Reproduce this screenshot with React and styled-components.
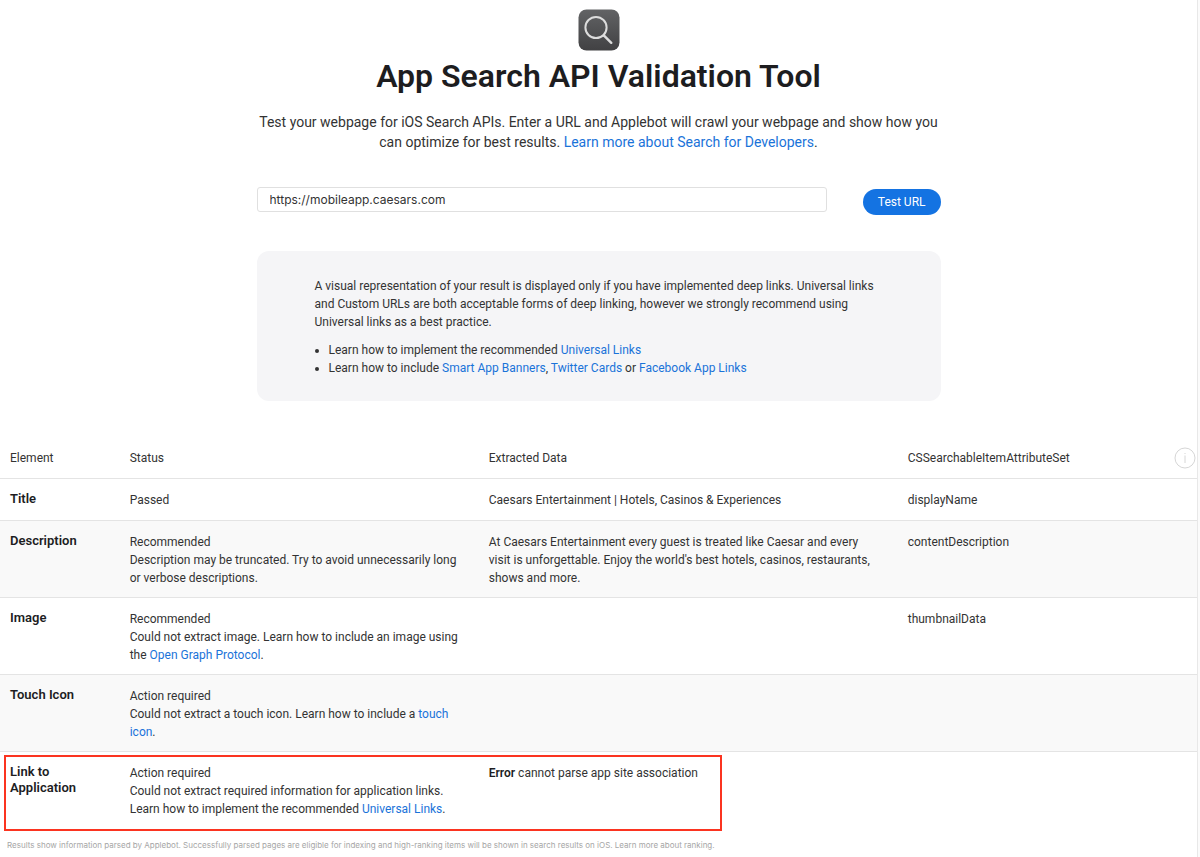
import React, { useState } from 'react'
import styled, { createGlobalStyle } from 'styled-components'

const rows = [
  {
    name: 'Title',
    status: 'Passed',
    data: 'Caesars Entertainment | Hotels, Casinos & Experiences',
    attribute: 'displayName',
  },
  {
    name: 'Description',
    status: 'Recommended',
    detail: 'Description may be truncated. Try to avoid unnecessarily long or verbose descriptions.',
    data: "At Caesars Entertainment every guest is treated like Caesar and every visit is unforgettable. Enjoy the world's best hotels, casinos, restaurants, shows and more.",
    attribute: 'contentDescription',
  },
  {
    name: 'Image',
    status: 'Recommended',
    detail: (
      <>
        Could not extract image. Learn how to include an image using the <a href="#og">Open Graph Protocol</a>.
      </>
    ),
    attribute: 'thumbnailData',
  },
  {
    name: 'Touch Icon',
    status: 'Action required',
    detail: (
      <>
        Could not extract a touch icon. Learn how to include a <a href="#touch">touch icon</a>.
      </>
    ),
  },
  {
    name: 'Link to Application',
    status: 'Action required',
    detail: (
      <>
        Could not extract required information for application links. Learn how to implement the
        recommended <a href="#universal">Universal Links</a>.
      </>
    ),
    data: (
      <>
        <strong>Error</strong> cannot parse app site association
      </>
    ),
    marked: true,
  },
]

const App = () => {
  const [url, setUrl] = useState('https://mobileapp.caesars.com')

  return (
    <>
      <GlobalStyle />
      <Page>
        <Intro>
          <SearchIcon />
          <Heading>App Search API Validation Tool</Heading>
          <Lead>
            Test your webpage for iOS Search APIs. Enter a URL and Applebot will crawl your webpage and
            show how you can optimize for best results.{' '}
            <a href="#search">Learn more about Search for Developers</a>.
          </Lead>
          <Form onSubmit={(e) => e.preventDefault()}>
            <UrlInput
              type="text"
              aria-label="URL"
              value={url}
              onChange={(e) => setUrl(e.target.value)}
            />
            <TestButton type="submit">Test URL</TestButton>
          </Form>
          <Note>
            <p>
              A visual representation of your result is displayed only if you have implemented deep
              links. Universal links and Custom URLs are both acceptable forms of deep linking, however
              we strongly recommend using Universal links as a best practice.
            </p>
            <ul>
              <li>
                Learn how to implement the recommended <a href="#universal">Universal Links</a>
              </li>
              <li>
                Learn how to include <a href="#banners">Smart App Banners</a>,{' '}
                <a href="#twitter">Twitter Cards</a> or <a href="#facebook">Facebook App Links</a>
              </li>
            </ul>
          </Note>
        </Intro>
        <Results>
          <colgroup>
            <Col $width="10%" />
            <Col $width="30%" />
            <Col $width="35%" />
            <Col $width="25%" />
          </colgroup>
          <thead>
            <tr>
              <HeadCell scope="col">Element</HeadCell>
              <HeadCell scope="col">Status</HeadCell>
              <HeadCell scope="col">Extracted Data</HeadCell>
              <HeadCell scope="col">
                <HeadContent>
                  CSSearchableItemAttributeSet
                  <InfoButton type="button" aria-label="Information">
                    <svg width="22" height="22" viewBox="0 0 22 22" fill="none" stroke="#d6d6d6">
                      <circle cx="11" cy="11" r="10" />
                      <path d="M11 6v1M11 8.5v7.5" />
                    </svg>
                  </InfoButton>
                </HeadContent>
              </HeadCell>
            </tr>
          </thead>
          <tbody>
            {rows.map((row) => (
              <Row key={row.name}>
                <NameCell scope="row">
                  {row.name}
                  {row.marked && <Marker />}
                </NameCell>
                <Cell>
                  <div>{row.status}</div>
                  {row.detail}
                </Cell>
                <Cell>{row.data}</Cell>
                <Cell>{row.attribute}</Cell>
              </Row>
            ))}
          </tbody>
        </Results>
        <Footnote>
          Results show information parsed by Applebot. Successfully parsed pages are eligible for
          indexing and high-ranking items will be shown in search results on iOS. Learn more about
          ranking.
        </Footnote>
      </Page>
    </>
  )
}

const SearchIcon = () => (
  <svg width="42" height="42" viewBox="0 0 42 42" fill="none" aria-hidden="true">
    <defs>
      <linearGradient id="tile" x1="0" y1="0" x2="0" y2="1">
        <stop offset="0" stopColor="#626365" />
        <stop offset="1" stopColor="#414143" />
      </linearGradient>
    </defs>
    <rect x="0.5" y="0.5" width="41" height="41" rx="8" fill="url(#tile)" />
    <circle cx="18" cy="18.5" r="10.6" stroke="#dcdcdc" strokeWidth="2" />
    <path d="M25.8 26.3L33.3 33.8" stroke="#dcdcdc" strokeWidth="2.4" strokeLinecap="round" />
  </svg>
)

export default App


const GlobalStyle = createGlobalStyle`
* {
    box-sizing: border-box;
}
body {
    margin: 0;
    background: #fbfbfb;
    color: #333;
    font-family: Roboto, "Liberation Sans", sans-serif;
    font-size: 12px;
    line-height: 18px;
}
a {
    color: #1a73d9;
    text-decoration: none;
}
strong {
    color: #1d1d1f;
    font-weight: 600;
}
`

const Page = styled.main`
margin-right: 2px;
padding-bottom: 6px;
background: #fff;
border-right: 1px solid #e8e8e8;
`

const Intro = styled.section`
display: flex;
flex-direction: column;
align-items: center;
max-width: 684px;
margin: 0 auto;
padding-top: 9px;
`

const Heading = styled.h1`
margin: 4px 0 0;
color: #1d1d1f;
font-size: 32px;
line-height: 42px;
font-weight: 600;
text-align: center;
`

const Lead = styled.p`
margin: 15px 0 0;
font-size: 14px;
line-height: 20px;
text-align: center;
`

const Form = styled.form`
display: flex;
align-items: flex-end;
gap: 36px;
width: 100%;
margin-top: 35px;
`

const UrlInput = styled.input`
flex: 1;
min-width: 0;
height: 25px;
margin-bottom: 3px;
padding: 0 12px;
border: 1px solid #e0e0e0;
border-radius: 3px;
background: #fff;
color: #333;
font: inherit;
font-family: Inter, "Liberation Sans", sans-serif;
`

const TestButton = styled.button`
height: 26px;
padding: 0 15px;
border: none;
border-radius: 13px;
background: #1473e2;
color: #fff;
font: inherit;
`

const Note = styled.div`
width: 100%;
margin-top: 36px;
padding: 26px 58px 24px;
border-radius: 12px;
background: #f5f5f7;

p{
    margin: 0 0 10px;
}
ul{
    margin: 0;
    padding-left: 14px;
}
`

const Results = styled.table`
width: 100%;
margin-top: 36px;
border-collapse: separate;
border-spacing: 0;
table-layout: fixed;
`

const Col = styled.col`
width: ${(props) => props.$width};
`

const Cell = styled.td`
height: 42px;
padding: 12px 20px 10px 10px;
border-bottom: 1px solid #e4e4e4;
vertical-align: top;
`

const HeadCell = styled(Cell).attrs({ as: 'th' })`
font-weight: 400;
text-align: left;
`

const HeadContent = styled.div`
display: flex;
align-items: center;
justify-content: space-between;
height: 18px;
`

const InfoButton = styled.button`
display: flex;
margin-right: -19px;
padding: 0;
border: none;
background: none;
`

const NameCell = styled(Cell).attrs({ as: 'th' })`
color: #1d1d1f;
font-size: 13px;
line-height: 16px;
font-weight: 600;
text-align: left;
`

const Row = styled.tr`
position: relative;

&:nth-child(even){
    background: #f9f9f9;
}
&:last-child > *{
    border-bottom: none;
}
`

const Marker = styled.span`
position: absolute;
top: 3px;
bottom: -3px;
left: 4px;
width: 60%;
border: 2px solid #fb3420;
pointer-events: none;
`

const Footnote = styled.p`
margin: 11px 0 0;
padding: 0 7px;
color: #a6a6a6;
font-family: Inter, "Liberation Sans", sans-serif;
font-size: 8px;
line-height: 12px;
`
